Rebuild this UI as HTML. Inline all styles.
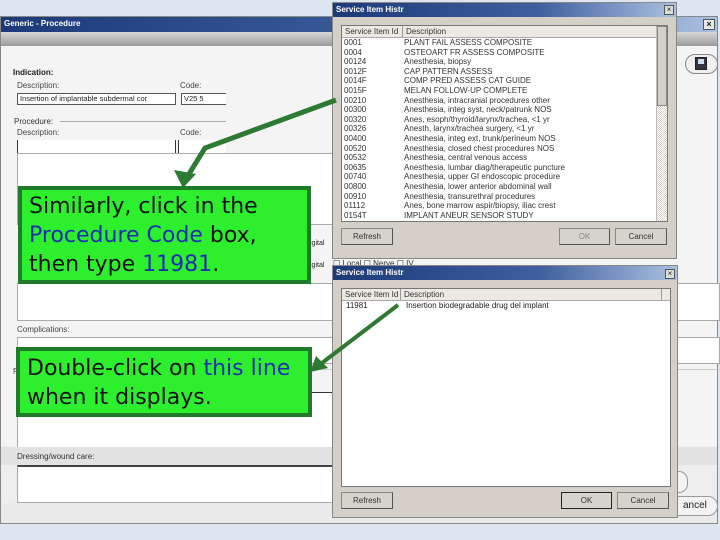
<!DOCTYPE html>
<html><head><style>
*{margin:0;padding:0;box-sizing:border-box}
body{width:720px;height:540px;background:#dde6f1;position:relative;overflow:hidden;font-family:"Liberation Sans",sans-serif;font-size:8px;color:#222}
.a{position:absolute}
.tb{background:linear-gradient(90deg,#1c3a78,#3f5f9e 60%,#a9c0e0);color:#fff;font-weight:bold;font-size:8px;line-height:14px;padding-left:3px}
.inp{background:#fff;border:1px solid #555}
.ta{background:#fff;border:1px solid #aaa}
.btn{background:#d6d3cc;border:1px solid #888;border-right-color:#555;border-bottom-color:#555;text-align:center;font-size:8px;line-height:16px;color:#333}
.dlg{background:#d4d0c8;border:1px solid #888}
.list{background:#fff;border:1px solid #777}
.call{background:#2eef2e;border:4px solid #1f7a2a;font-family:"DejaVu Sans",sans-serif;font-size:22px;line-height:29px;padding-left:7px;color:#111;white-space:nowrap}
.bl{color:#1a2fb0}
</style></head><body>
<div class="a" style="left:0;top:16px;width:718px;height:508px;background:#eeeeee;border:1px solid #888"></div>
<div class="a tb" style="left:1px;top:17px;width:716px;height:15px">Generic - Procedure</div>
<div class="a" style="left:703px;top:19px;width:12px;height:11px;background:#e8e8e8;border:1px solid #555;font-size:9px;line-height:9px;text-align:center;font-weight:bold">×</div>
<div class="a" style="left:1px;top:32px;width:716px;height:14px;background:linear-gradient(#d8d8d8,#9a9a9a)"></div>
<div class="a" style="left:1px;top:46px;width:716px;height:400px;background:#f4f4f4"></div>
<div class="a" style="left:13px;top:68px;font-weight:bold">Indication:</div>
<div class="a" style="left:17px;top:81px;color:#444">Description:</div>
<div class="a" style="left:180px;top:81px;color:#444">Code:</div>
<div class="a inp" style="left:17px;top:93px;width:159px;height:12px;font-size:7.5px;line-height:10px;padding-left:2px;white-space:nowrap;overflow:hidden">Insertion of implantable subdermal cor</div>
<div class="a inp" style="left:181px;top:93px;width:45px;height:12px;font-size:7.5px;line-height:10px;padding-left:2px;border-right:none">V25 5</div>
<div class="a" style="left:14px;top:117px;color:#333">Procedure:</div>
<div class="a" style="left:60px;top:121px;width:166px;border-top:1px solid #aaa"></div>
<div class="a" style="left:17px;top:128px;color:#444">Description:</div>
<div class="a" style="left:180px;top:128px;color:#444">Code:</div>
<div class="a" style="left:17px;top:140px;width:159px;height:13px;background:#fff;border-left:1px solid #333;border-right:1px solid #333"></div>
<div class="a" style="left:178px;top:140px;width:48px;height:13px;background:#fff;border-left:1px solid #333"></div>
<div class="a ta" style="left:17px;top:153px;width:316px;height:72px"></div>
<div class="a" style="left:310px;top:240px;font-size:7px">igital</div>
<div class="a" style="left:310px;top:262px;font-size:7px">igital</div>
<div class="a ta" style="left:17px;top:283px;width:703px;height:38px"></div>
<div class="a" style="left:17px;top:325px;color:#444">Complications:</div>
<div class="a ta" style="left:17px;top:337px;width:703px;height:27px"></div>
<div class="a" style="left:13px;top:369px;width:707px;border-top:1px solid #ccc"></div>
<div class="a" style="left:13px;top:367px;color:#555">Pe</div>
<div class="a ta" style="left:17px;top:392px;width:316px;height:56px;border-top:1px solid #333"></div>
<div class="a" style="left:1px;top:447px;width:716px;height:18px;background:#e2e2e2"></div>
<div class="a" style="left:17px;top:452px;color:#333">Dressing/wound care:</div>
<div class="a ta" style="left:17px;top:465px;width:316px;height:38px;border-top:2px solid #444"></div>
<div class="a" style="left:1px;top:503px;width:716px;height:20px;background:#eaeaea"></div>
<div class="a" style="left:685px;top:54px;width:33px;height:20px;border:1px solid #888;border-radius:10px;background:#f0f0f0"></div>
<div class="a" style="left:695px;top:57px;width:12px;height:13px;background:#334;border:1px solid #222"><div style="margin:1px 2px;height:5px;background:#cde"></div></div>
<div class="a" style="left:670px;top:471px;width:18px;height:22px;border:1px solid #999;border-radius:10px;background:#f3f3f3"></div>
<div class="a" style="left:668px;top:496px;width:50px;height:20px;border:1px solid #999;border-radius:10px;background:#f3f3f3;font-size:10px;line-height:18px;padding-left:14px">ancel</div>
<div class="a" style="left:333px;top:259px;font-size:8px;color:#333">☐ Local ☐ Nerve ☐ IV</div>

<div class="a dlg" style="left:332px;top:2px;width:345px;height:257px"></div>
<div class="a tb" style="left:333px;top:3px;width:343px;height:14px">Service Item Histr</div>
<div class="a" style="left:664px;top:5px;width:10px;height:10px;background:#ddd;border:1px solid #555;font-size:8px;line-height:8px;text-align:center">×</div>
<div class="a list" style="left:341px;top:25px;width:327px;height:197px">
 <div style="height:12px;border-bottom:1px solid #aaa;background:#ece9e2;position:relative;font-size:8px;line-height:11px;color:#333"><span style="position:absolute;left:3px">Service Item Id</span><span style="position:absolute;left:60px;border-left:1px solid #999;padding-left:3px">Description</span></div>
 <div style="position:absolute;left:2px;top:12px;font-size:8px;color:#333;line-height:9.6px;white-space:nowrap">
 0001<br>0004<br>00124<br>0012F<br>0014F<br>0015F<br>00210<br>00300<br>00320<br>00326<br>00400<br>00520<br>00532<br>00635<br>00740<br>00800<br>00910<br>01112<br>0154T</div>
 <div style="position:absolute;left:62px;top:12px;font-size:8px;color:#333;line-height:9.6px;white-space:nowrap">
 PLANT FAIL ASSESS COMPOSITE<br>OSTEOART FR ASSESS COMPOSITE<br>Anesthesia, biopsy<br>CAP PATTERN ASSESS<br>COMP PRED ASSESS CAT GUIDE<br>MELAN FOLLOW-UP COMPLETE<br>Anesthesia, intracranial procedures other<br>Anesthesia, integ syst, neck/patrunk NOS<br>Anes, esoph/thyroid/larynx/trachea, &lt;1 yr<br>Anesth, larynx/trachea surgery, &lt;1 yr<br>Anesthesia, integ ext, trunk/perineum NOS<br>Anesthesia, closed chest procedures NOS<br>Anesthesia, central venous access<br>Anesthesia, lumbar diag/therapeutic puncture<br>Anesthesia, upper GI endoscopic procedure<br>Anesthesia, lower anterior abdominal wall<br>Anesthesia, transurethral procedures<br>Anes, bone marrow aspir/biopsy, iliac crest<br>IMPLANT ANEUR SENSOR STUDY</div>
 <div style="position:absolute;right:0;top:0;width:11px;height:195px;background:repeating-conic-gradient(#d4d0c8 0 25%,#fff 0 50%) 0 0/2px 2px;border-left:1px solid #bbb"><div style="height:80px;background:#d4d0c8;border:1px solid #888"></div></div>
</div>
<div class="a btn" style="left:341px;top:228px;width:52px;height:17px">Refresh</div>
<div class="a btn" style="left:559px;top:228px;width:51px;height:17px;color:#888">OK</div>
<div class="a btn" style="left:615px;top:228px;width:52px;height:17px">Cancel</div>

<div class="a dlg" style="left:332px;top:265px;width:346px;height:253px"></div>
<div class="a tb" style="left:333px;top:266px;width:344px;height:14px">Service Item Histr</div>
<div class="a" style="left:665px;top:269px;width:10px;height:10px;background:#ddd;border:1px solid #555;font-size:8px;line-height:8px;text-align:center">×</div>
<div class="a list" style="left:341px;top:288px;width:330px;height:199px">
 <div style="height:12px;border-bottom:1px solid #aaa;background:#ece9e2;position:relative;font-size:8px;line-height:11px;color:#333"><span style="position:absolute;left:3px">Service Item Id</span><span style="position:absolute;left:58px;border-left:1px solid #999;padding-left:3px;width:262px;border-right:1px solid #999">Description</span></div>
 <div style="position:absolute;left:4px;top:12px;font-size:8px;line-height:10px">11981</div>
 <div style="position:absolute;left:64px;top:12px;font-size:8px;line-height:10px">Insertion biodegradable drug del implant</div>
</div>
<div class="a btn" style="left:341px;top:492px;width:52px;height:17px">Refresh</div>
<div class="a btn" style="left:561px;top:492px;width:51px;height:17px;border:1px solid #222">OK</div>
<div class="a btn" style="left:617px;top:492px;width:52px;height:17px">Cancel</div>

<svg class="a" style="left:0;top:0" width="720" height="540">
 <polyline points="336,100 205,148 184,182" fill="none" stroke="#2e7a32" stroke-width="5"/>
 <polygon points="174,170 196,174 183,188" fill="#2e7a32"/>
 <line x1="398" y1="305" x2="318" y2="366" stroke="#2e7a32" stroke-width="4"/>
 <polygon points="310,372 316,356 328,368" fill="#2e7a32"/>
</svg>

<div class="a call" style="left:18px;top:186px;width:293px;height:98px;padding-top:2px">Similarly, click in the<br><span class="bl">Procedure Code</span> box,<br>then type <span class="bl">11981</span>.</div>
<div class="a call" style="left:16px;top:347px;width:296px;height:70px;padding-top:3px">Double-click on <span class="bl">this line</span><br>when it displays.</div>
</body></html>
